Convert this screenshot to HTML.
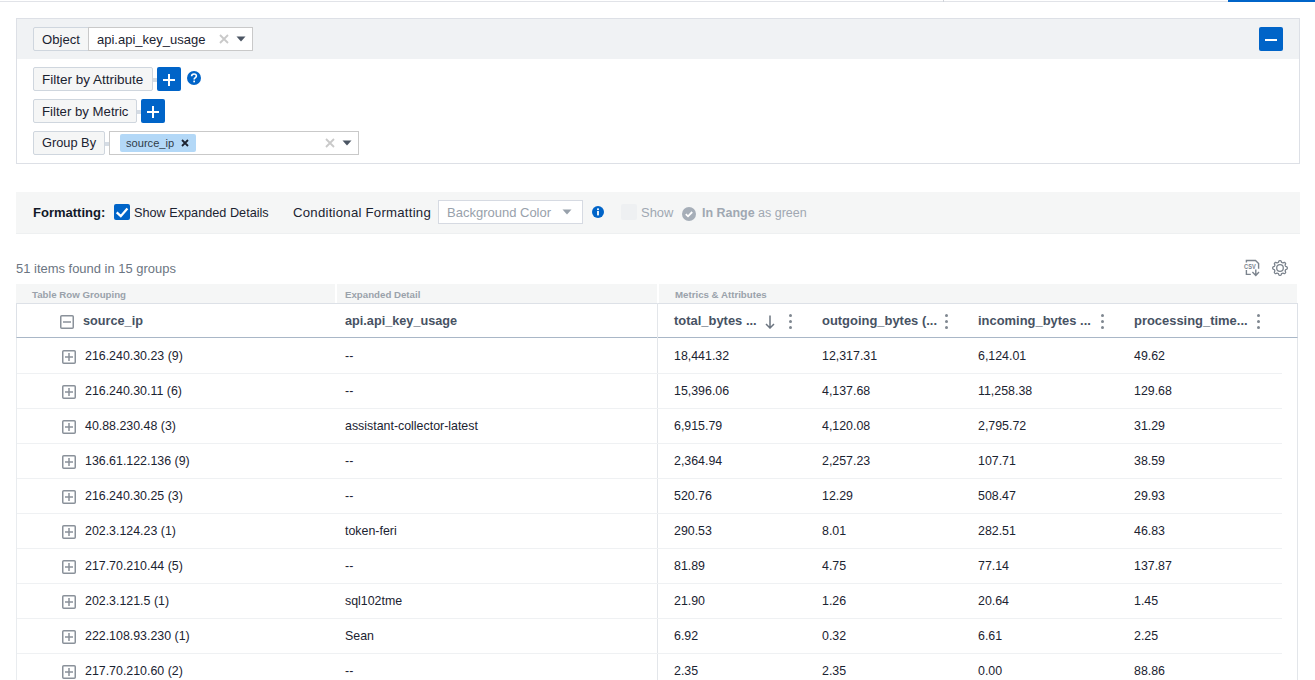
<!DOCTYPE html>
<html><head><meta charset="utf-8">
<style>
*{box-sizing:border-box;margin:0;padding:0}
html,body{width:1315px;height:680px;overflow:hidden;background:#fff}
body{font-family:"Liberation Sans",sans-serif;color:#1b2331;position:relative;font-size:13px}
.a{position:absolute}
.t{position:absolute;white-space:nowrap;line-height:1}
#topline{left:0;top:1px;width:1315px;height:1px;background:#e1e3e8}
#tick{left:943px;top:0;width:1px;height:2px;background:#d0d3d9}
#bluebar{left:1228px;top:0;width:87px;height:2px;background:#0064c8}
#panel{left:16px;top:18px;width:1284px;height:146px;border:1px solid #dde0e6;background:#fff}
#phead{left:17px;top:19px;width:1282px;height:40px;background:#f0f2f4}
.lbl{position:absolute;height:24px;background:#f5f6f6;border:1px solid #cfd6de;border-radius:2px}
.inp{position:absolute;height:24px;background:#fff;border:1px solid #c9c9c9}
.btn{position:absolute;width:24px;height:24px;background:#0064c8;border-radius:2px}
.btn:before{content:"";position:absolute;left:6px;top:12px;width:12px;height:2px;background:#fff}
.btn:after{content:"";position:absolute;left:11px;top:7px;width:2px;height:12px;background:#fff}
.btn.minus:after{display:none}
.conn{position:absolute;height:4px;background:#d5dce4}
#fbar{left:16px;top:192px;width:1284px;height:42px;background:#f5f6f6;border-bottom:1px solid #eef0f1}
.grp{position:absolute;top:284px;height:19px;background:#f5f6f6}
.gt{position:absolute;top:290px;font-size:9.7px;font-weight:bold;color:#9aa2ab;white-space:nowrap;line-height:1}
#thead{left:16px;top:303px;width:1282px;height:35px;border:1px solid #dde1e7;border-bottom:1px solid #a9b7c7;background:#fff}
#tbody{left:16px;top:338px;width:1282px;height:342px;border-left:1px solid #e9ecef;border-right:1px solid #e3e6ea}
#vdiv{left:657px;top:303px;width:1px;height:377px;background:#e3e6ea}
.th{position:absolute;top:315px;font-size:12.95px;font-weight:bold;color:#475263;white-space:nowrap;line-height:1}
.td{position:absolute;font-size:12.4px;color:#1b2331;white-space:nowrap;line-height:1}
.rl{position:absolute;left:17px;width:1265px;height:1px;background:#eff1f3}
.pbox{position:absolute;left:62px;width:14px;height:14px}
.kebab{position:absolute;top:314px;width:3px;height:15px}
.kebab i{position:absolute;left:0;width:3px;height:3px;border-radius:50%;background:#7f8790}
</style></head><body>
<div id="topline" class="a"></div>
<div id="tick" class="a"></div>
<div id="bluebar" class="a"></div>

<div id="panel" class="a"></div>
<div id="phead" class="a"></div>

<!-- Object row -->
<div class="lbl" style="left:33px;top:27px;width:56px;border-radius:2px 0 0 2px"></div>
<div class="t" style="left:42px;top:33px;font-size:13.1px">Object</div>
<div class="inp" style="left:88px;top:27px;width:165px"></div>
<div class="t" style="left:97px;top:33px;font-size:13px">api.api_key_usage</div>
<svg class="a" style="left:219px;top:34px" width="10" height="10" viewBox="0 0 10 10"><path d="M1 1L9 9M9 1L1 9" stroke="#c9c9c9" stroke-width="1.8"/></svg>
<svg class="a" style="left:236px;top:36px" width="10" height="6" viewBox="0 0 10 6"><path d="M0.5 0.5H9.5L5 5.5Z" fill="#4b5563"/></svg>

<div class="btn minus" style="left:1259px;top:27px"></div>

<!-- Filter by Attribute -->
<div class="lbl" style="left:33px;top:67px;width:120px"></div>
<div class="t" style="left:42px;top:73px;font-size:13.5px">Filter by Attribute</div>
<div class="conn" style="left:153px;top:78px;width:4px"></div>
<div class="btn" style="left:157px;top:67px"></div>
<svg class="a" style="left:187px;top:71px" width="14" height="14" viewBox="0 0 14 14"><circle cx="7" cy="7" r="7" fill="#0064c8"/><path d="M4.6 5.3C4.6 3.9 5.6 3 7 3C8.4 3 9.4 3.9 9.4 5.1C9.4 6.4 8.2 6.7 7.6 7.3C7.3 7.6 7.2 7.9 7.2 8.6" stroke="#fff" stroke-width="1.6" fill="none"/><rect x="6.3" y="9.6" width="1.7" height="1.7" fill="#fff"/></svg>

<!-- Filter by Metric -->
<div class="lbl" style="left:33px;top:99px;width:104px"></div>
<div class="t" style="left:42px;top:105px;font-size:13.2px">Filter by Metric</div>
<div class="conn" style="left:137px;top:110px;width:4px"></div>
<div class="btn" style="left:141px;top:99px"></div>

<!-- Group By -->
<div class="lbl" style="left:33px;top:131px;width:72px"></div>
<div class="t" style="left:42px;top:137px;font-size:12.8px">Group By</div>
<div class="conn" style="left:105px;top:142px;width:4px"></div>
<div class="inp" style="left:109px;top:131px;width:250px"></div>
<div class="a" style="left:120px;top:134px;width:76px;height:18px;background:#b3d8f7;border-radius:2px"></div>
<div class="t" style="left:126px;top:138px;font-size:11.1px;color:#2f3b49">source_ip</div>
<svg class="a" style="left:181px;top:139px" width="8" height="8" viewBox="0 0 8 8"><path d="M1 1L7 7M7 1L1 7" stroke="#1b2331" stroke-width="1.8"/></svg>
<svg class="a" style="left:325px;top:138px" width="10" height="10" viewBox="0 0 10 10"><path d="M1 1L9 9M9 1L1 9" stroke="#c9c9c9" stroke-width="1.8"/></svg>
<svg class="a" style="left:342px;top:140px" width="10" height="6" viewBox="0 0 10 6"><path d="M0.5 0.5H9.5L5 5.5Z" fill="#4b5563"/></svg>

<!-- Formatting bar -->
<div id="fbar" class="a"></div>
<div class="t" style="left:33px;top:206px;font-size:13px;font-weight:bold;color:#111827">Formatting:</div>
<svg class="a" style="left:114px;top:204px" width="16" height="16" viewBox="0 0 16 16"><rect x="0" y="0" width="16" height="16" rx="2" fill="#0064c8"/><path d="M2.7 8.4L6.8 12.2L13.4 4.6" stroke="#fff" stroke-width="2.3" fill="none"/></svg>
<div class="t" style="left:134px;top:207px;font-size:12.7px">Show Expanded Details</div>
<div class="t" style="left:293px;top:206px;font-size:13.2px;letter-spacing:0.24px">Conditional Formatting</div>
<div class="inp" style="left:438px;top:200px;width:145px;border-color:#d6dae2"></div>
<div class="t" style="left:447px;top:206px;font-size:13px;color:#98a1ab">Background Color</div>
<svg class="a" style="left:562px;top:209px" width="10" height="6" viewBox="0 0 10 6"><path d="M0.5 0.5H9.5L5 5.5Z" fill="#98a1ab"/></svg>
<svg class="a" style="left:592px;top:206px" width="12" height="12" viewBox="0 0 12 12"><circle cx="6" cy="6" r="6" fill="#0064c8"/><rect x="5.1" y="5" width="1.8" height="4.4" fill="#fff"/><rect x="5.1" y="2.4" width="1.8" height="1.7" fill="#fff"/></svg>
<div class="a" style="left:621px;top:204px;width:16px;height:16px;background:#eef0f2;border-radius:2px"></div>
<div class="t" style="left:641px;top:207px;font-size:12.95px;color:#a0a8b2">Show</div>
<svg class="a" style="left:682px;top:207px" width="14" height="14" viewBox="0 0 14 14"><circle cx="7" cy="7" r="7" fill="#a6aeb8"/><path d="M3.8 7.2L6 9.3L10.2 5" stroke="#fff" stroke-width="1.8" fill="none"/></svg>
<div class="t" style="left:702px;top:207px;font-size:12.46px;font-weight:bold;color:#a0a8b2">In Range</div>
<div class="t" style="left:758px;top:207px;font-size:12.5px;color:#a0a8b2">as green</div>

<!-- results line -->
<div class="t" style="left:16px;top:263px;font-size:12.96px;color:#6b7582">51 items found in 15 groups</div>
<!-- csv icon -->
<svg class="a" style="left:1243px;top:259px" width="18" height="18" viewBox="0 0 18 18" fill="none" stroke="#7b838d" stroke-width="1.4">
<path d="M3.4 3.6V1.5H12.5L15.6 4.6V9.7"/>
<path d="M3.4 11V15.4H7.8"/>
<path d="M12.8 10.4V16.3M9.4 13.1L12.8 16.4L16 13.1"/>
<text x="1.1" y="10.1" textLength="11.6" lengthAdjust="spacingAndGlyphs" font-family="Liberation Sans" font-size="6.8" font-weight="bold" fill="#7b838d" stroke="none">CSV</text>
</svg>
<!-- gear icon -->
<svg class="a" style="left:1271px;top:259px" width="18" height="18" viewBox="0 0 18 18" fill="none" stroke="#7b838d" stroke-width="1.3">
<path d="M9.00 1.70 L9.36 1.72 L9.71 1.79 L10.03 2.03 L10.28 2.58 L10.47 3.13 L10.70 3.39 L10.96 3.53 L11.22 3.64 L11.48 3.75 L11.76 3.83 L12.11 3.81 L12.64 3.55 L13.20 3.34 L13.59 3.40 L13.90 3.60 L14.16 3.84 L14.40 4.10 L14.60 4.41 L14.66 4.80 L14.45 5.36 L14.19 5.89 L14.17 6.24 L14.25 6.52 L14.36 6.78 L14.47 7.04 L14.61 7.30 L14.87 7.53 L15.42 7.72 L15.97 7.97 L16.21 8.29 L16.28 8.64 L16.30 9.00 L16.28 9.36 L16.21 9.71 L15.97 10.03 L15.42 10.28 L14.87 10.47 L14.61 10.70 L14.47 10.96 L14.36 11.22 L14.25 11.48 L14.17 11.76 L14.19 12.11 L14.45 12.64 L14.66 13.20 L14.60 13.59 L14.40 13.90 L14.16 14.16 L13.90 14.40 L13.59 14.60 L13.20 14.66 L12.64 14.45 L12.11 14.19 L11.76 14.17 L11.48 14.25 L11.22 14.36 L10.96 14.47 L10.70 14.61 L10.47 14.87 L10.28 15.42 L10.03 15.97 L9.71 16.21 L9.36 16.28 L9.00 16.30 L8.64 16.28 L8.29 16.21 L7.97 15.97 L7.72 15.42 L7.53 14.87 L7.30 14.61 L7.04 14.47 L6.78 14.36 L6.52 14.25 L6.24 14.17 L5.89 14.19 L5.36 14.45 L4.80 14.66 L4.41 14.60 L4.10 14.40 L3.84 14.16 L3.60 13.90 L3.40 13.59 L3.34 13.20 L3.55 12.64 L3.81 12.11 L3.83 11.76 L3.75 11.48 L3.64 11.22 L3.53 10.96 L3.39 10.70 L3.13 10.47 L2.58 10.28 L2.03 10.03 L1.79 9.71 L1.72 9.36 L1.70 9.00 L1.72 8.64 L1.79 8.29 L2.03 7.97 L2.58 7.72 L3.13 7.53 L3.39 7.30 L3.53 7.04 L3.64 6.78 L3.75 6.52 L3.83 6.24 L3.81 5.89 L3.55 5.36 L3.34 4.80 L3.40 4.41 L3.60 4.10 L3.84 3.84 L4.10 3.60 L4.41 3.40 L4.80 3.34 L5.36 3.55 L5.89 3.81 L6.24 3.83 L6.52 3.75 L6.78 3.64 L7.04 3.53 L7.30 3.39 L7.53 3.13 L7.72 2.58 L7.97 2.03 L8.29 1.79 L8.64 1.72Z"/>
<circle cx="9" cy="9" r="3.3"/>
</svg>

<!-- table group band -->
<div class="grp" style="left:16px;width:319px"></div>
<div class="grp" style="left:337px;width:320px"></div>
<div class="grp" style="left:659px;width:638px"></div>
<div class="gt" style="left:32px">Table Row Grouping</div>
<div class="gt" style="left:345px">Expanded Detail</div>
<div class="gt" style="left:675px">Metrics &amp; Attributes</div>

<div id="thead" class="a"></div>
<div id="tbody" class="a"></div>
<div id="vdiv" class="a"></div>
<svg class="a" style="left:60px;top:315px" width="14" height="14" viewBox="0 0 14 14" fill="none" stroke="#8a919a" stroke-width="1.5"><rect x="0.75" y="0.75" width="12.5" height="12.5" rx="1"/><path d="M3 7H11"/></svg>
<div class="th" style="left:83px;font-size:12.7px">source_ip</div>
<div class="th" style="left:345px;font-size:12.7px">api.api_key_usage</div>
<div class="th" style="left:674px">total_bytes ...</div>
<div class="th" style="left:822px">outgoing_bytes (...</div>
<div class="th" style="left:978px">incoming_bytes ...</div>
<div class="th" style="left:1134px">processing_time...</div>
<svg class="a" style="left:765px;top:315px" width="10" height="14" viewBox="0 0 10 14" fill="none" stroke="#6c7580" stroke-width="1.5"><path d="M5 0.5V13M1 9L5 13L9 9"/></svg>
<div class="kebab" style="left:789px"><i style="top:0"></i><i style="top:6px"></i><i style="top:12px"></i></div>
<div class="kebab" style="left:945px"><i style="top:0"></i><i style="top:6px"></i><i style="top:12px"></i></div>
<div class="kebab" style="left:1101px"><i style="top:0"></i><i style="top:6px"></i><i style="top:12px"></i></div>
<div class="kebab" style="left:1257px"><i style="top:0"></i><i style="top:6px"></i><i style="top:12px"></i></div>

<svg class="a" style="left:62px;top:350px" width="14" height="14" viewBox="0 0 14 14" fill="none" stroke="#8a919a" stroke-width="1.5"><rect x="0.75" y="0.75" width="12.5" height="12.5" rx="1"/><path d="M3 7H11M7 3V11"/></svg>
<div class="td" style="left:85px;top:350px">216.240.30.23 (9)</div>
<div class="td" style="left:345px;top:350px">--</div>
<div class="td" style="left:674px;top:350px">18,441.32</div>
<div class="td" style="left:822px;top:350px">12,317.31</div>
<div class="td" style="left:978px;top:350px">6,124.01</div>
<div class="td" style="left:1134px;top:350px">49.62</div>
<div class="rl" style="top:373px"></div>
<svg class="a" style="left:62px;top:385px" width="14" height="14" viewBox="0 0 14 14" fill="none" stroke="#8a919a" stroke-width="1.5"><rect x="0.75" y="0.75" width="12.5" height="12.5" rx="1"/><path d="M3 7H11M7 3V11"/></svg>
<div class="td" style="left:85px;top:385px">216.240.30.11 (6)</div>
<div class="td" style="left:345px;top:385px">--</div>
<div class="td" style="left:674px;top:385px">15,396.06</div>
<div class="td" style="left:822px;top:385px">4,137.68</div>
<div class="td" style="left:978px;top:385px">11,258.38</div>
<div class="td" style="left:1134px;top:385px">129.68</div>
<div class="rl" style="top:408px"></div>
<svg class="a" style="left:62px;top:420px" width="14" height="14" viewBox="0 0 14 14" fill="none" stroke="#8a919a" stroke-width="1.5"><rect x="0.75" y="0.75" width="12.5" height="12.5" rx="1"/><path d="M3 7H11M7 3V11"/></svg>
<div class="td" style="left:85px;top:420px">40.88.230.48 (3)</div>
<div class="td" style="left:345px;top:420px">assistant-collector-latest</div>
<div class="td" style="left:674px;top:420px">6,915.79</div>
<div class="td" style="left:822px;top:420px">4,120.08</div>
<div class="td" style="left:978px;top:420px">2,795.72</div>
<div class="td" style="left:1134px;top:420px">31.29</div>
<div class="rl" style="top:443px"></div>
<svg class="a" style="left:62px;top:455px" width="14" height="14" viewBox="0 0 14 14" fill="none" stroke="#8a919a" stroke-width="1.5"><rect x="0.75" y="0.75" width="12.5" height="12.5" rx="1"/><path d="M3 7H11M7 3V11"/></svg>
<div class="td" style="left:85px;top:455px">136.61.122.136 (9)</div>
<div class="td" style="left:345px;top:455px">--</div>
<div class="td" style="left:674px;top:455px">2,364.94</div>
<div class="td" style="left:822px;top:455px">2,257.23</div>
<div class="td" style="left:978px;top:455px">107.71</div>
<div class="td" style="left:1134px;top:455px">38.59</div>
<div class="rl" style="top:478px"></div>
<svg class="a" style="left:62px;top:490px" width="14" height="14" viewBox="0 0 14 14" fill="none" stroke="#8a919a" stroke-width="1.5"><rect x="0.75" y="0.75" width="12.5" height="12.5" rx="1"/><path d="M3 7H11M7 3V11"/></svg>
<div class="td" style="left:85px;top:490px">216.240.30.25 (3)</div>
<div class="td" style="left:345px;top:490px">--</div>
<div class="td" style="left:674px;top:490px">520.76</div>
<div class="td" style="left:822px;top:490px">12.29</div>
<div class="td" style="left:978px;top:490px">508.47</div>
<div class="td" style="left:1134px;top:490px">29.93</div>
<div class="rl" style="top:513px"></div>
<svg class="a" style="left:62px;top:525px" width="14" height="14" viewBox="0 0 14 14" fill="none" stroke="#8a919a" stroke-width="1.5"><rect x="0.75" y="0.75" width="12.5" height="12.5" rx="1"/><path d="M3 7H11M7 3V11"/></svg>
<div class="td" style="left:85px;top:525px">202.3.124.23 (1)</div>
<div class="td" style="left:345px;top:525px">token-feri</div>
<div class="td" style="left:674px;top:525px">290.53</div>
<div class="td" style="left:822px;top:525px">8.01</div>
<div class="td" style="left:978px;top:525px">282.51</div>
<div class="td" style="left:1134px;top:525px">46.83</div>
<div class="rl" style="top:548px"></div>
<svg class="a" style="left:62px;top:560px" width="14" height="14" viewBox="0 0 14 14" fill="none" stroke="#8a919a" stroke-width="1.5"><rect x="0.75" y="0.75" width="12.5" height="12.5" rx="1"/><path d="M3 7H11M7 3V11"/></svg>
<div class="td" style="left:85px;top:560px">217.70.210.44 (5)</div>
<div class="td" style="left:345px;top:560px">--</div>
<div class="td" style="left:674px;top:560px">81.89</div>
<div class="td" style="left:822px;top:560px">4.75</div>
<div class="td" style="left:978px;top:560px">77.14</div>
<div class="td" style="left:1134px;top:560px">137.87</div>
<div class="rl" style="top:583px"></div>
<svg class="a" style="left:62px;top:595px" width="14" height="14" viewBox="0 0 14 14" fill="none" stroke="#8a919a" stroke-width="1.5"><rect x="0.75" y="0.75" width="12.5" height="12.5" rx="1"/><path d="M3 7H11M7 3V11"/></svg>
<div class="td" style="left:85px;top:595px">202.3.121.5 (1)</div>
<div class="td" style="left:345px;top:595px">sql102tme</div>
<div class="td" style="left:674px;top:595px">21.90</div>
<div class="td" style="left:822px;top:595px">1.26</div>
<div class="td" style="left:978px;top:595px">20.64</div>
<div class="td" style="left:1134px;top:595px">1.45</div>
<div class="rl" style="top:618px"></div>
<svg class="a" style="left:62px;top:630px" width="14" height="14" viewBox="0 0 14 14" fill="none" stroke="#8a919a" stroke-width="1.5"><rect x="0.75" y="0.75" width="12.5" height="12.5" rx="1"/><path d="M3 7H11M7 3V11"/></svg>
<div class="td" style="left:85px;top:630px">222.108.93.230 (1)</div>
<div class="td" style="left:345px;top:630px">Sean</div>
<div class="td" style="left:674px;top:630px">6.92</div>
<div class="td" style="left:822px;top:630px">0.32</div>
<div class="td" style="left:978px;top:630px">6.61</div>
<div class="td" style="left:1134px;top:630px">2.25</div>
<div class="rl" style="top:653px"></div>
<svg class="a" style="left:62px;top:665px" width="14" height="14" viewBox="0 0 14 14" fill="none" stroke="#8a919a" stroke-width="1.5"><rect x="0.75" y="0.75" width="12.5" height="12.5" rx="1"/><path d="M3 7H11M7 3V11"/></svg>
<div class="td" style="left:85px;top:665px">217.70.210.60 (2)</div>
<div class="td" style="left:345px;top:665px">--</div>
<div class="td" style="left:674px;top:665px">2.35</div>
<div class="td" style="left:822px;top:665px">2.35</div>
<div class="td" style="left:978px;top:665px">0.00</div>
<div class="td" style="left:1134px;top:665px">88.86</div>
<div class="rl" style="top:688px"></div></body></html>
